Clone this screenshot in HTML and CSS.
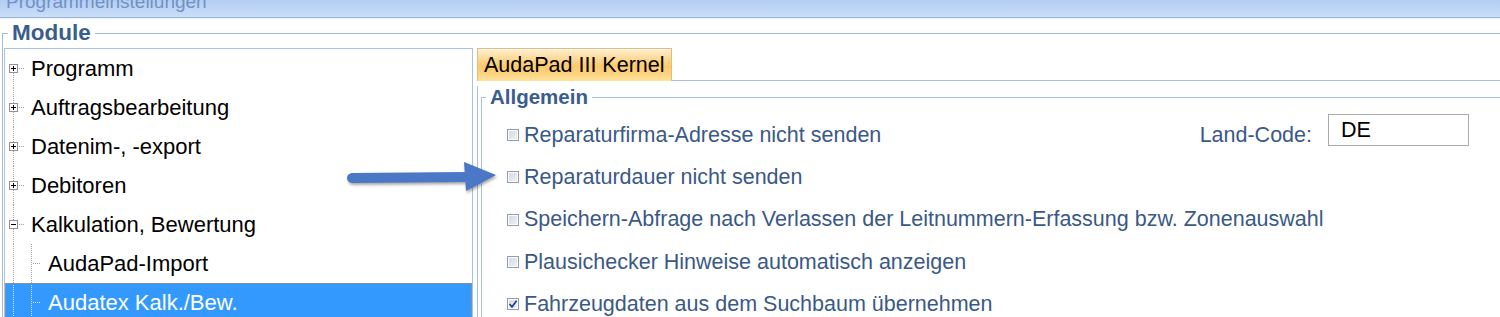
FILE: index.html
```html
<!DOCTYPE html>
<html lang="de">
<head>
<meta charset="UTF-8" />
<title>Programmeinstellungen</title>
<link rel="stylesheet" href="styles.css">
</head>
<body>

<div class="titlebar"><span class="title">Programmeinstellungen</span></div>

<fieldset class="group module">
  <legend>Module</legend>
  <div class="module-body">
    <div class="tree">
      <div class="node first"><span class="twig"><span class="expander plus"></span></span><span class="label">Programm</span></div>
      <div class="node"><span class="twig"><span class="expander plus"></span></span><span class="label">Auftragsbearbeitung</span></div>
      <div class="node"><span class="twig"><span class="expander plus"></span></span><span class="label">Datenim-, -export</span></div>
      <div class="node"><span class="twig"><span class="expander plus"></span></span><span class="label">Debitoren</span></div>
      <div class="node"><span class="twig"><span class="expander minus"></span></span><span class="label">Kalkulation, Bewertung</span></div>
      <div class="node child"><span class="twig"></span><span class="label">AudaPad-Import</span></div>
      <div class="node child selected"><span class="twig"></span><span class="label">Audatex Kalk./Bew.</span></div>
    </div>

    <div class="tabs">
      <div class="tabstrip">
        <div class="tab active">AudaPad III Kernel</div>
        <div class="tabstrip-rest"></div>
      </div>
      <div class="tabpanel">
        <fieldset class="group general">
          <legend>Allgemein</legend>
          <div class="options">
            <div class="option">
              <span class="check"></span>Reparaturfirma-Adresse nicht senden
              <div class="land">
                <label for="land">Land-Code:</label>
                <input id="land" type="text" value="DE">
              </div>
            </div>
            <div class="option"><span class="check"></span>Reparaturdauer nicht senden</div>
            <div class="option"><span class="check"></span>Speichern-Abfrage nach Verlassen der Leitnummern-Erfassung bzw. Zonenauswahl</div>
            <div class="option"><span class="check"></span>Plausichecker Hinweise automatisch anzeigen</div>
            <div class="option">
              <span class="check checked"><svg width="10" height="10" viewBox="0 0 10 10"><path d="M1.5 5 L4 7.8 L8.6 1.8" fill="none" stroke="#1f3f99" stroke-width="1.7"/></svg></span>Fahrzeugdaten aus dem Suchbaum übernehmen
            </div>
          </div>
        </fieldset>
      </div>
    </div>
  </div>
</fieldset>

<!-- Hinweis-Pfeil aus dem Screenshot -->
<svg class="arrow" width="160" height="40" viewBox="0 0 160 40">
  <line x1="7" y1="20" x2="124" y2="19" stroke="#4a77c6" stroke-width="10" stroke-linecap="round"/>
  <polygon points="119,4 151,17 121,33" fill="#4a77c6"/>
</svg>

</body>
</html>
```

FILE: styles.css
```css
body { margin: 0; width: 1500px; height: 317px; overflow: hidden; background: #fff; position: relative; font-family: "Liberation Sans", Arial, sans-serif; }

.titlebar { height: 17px; overflow: hidden; padding-left: 6px; background: linear-gradient(#b3cef3, #cadef8); border-bottom: 1px solid #9bb5d9; box-shadow: 0 1px 0 #eef4fc; }
.title { display: block; margin-top: -8px; font-size: 19px; line-height: 19px; color: #7092c6; }

.group { margin: 0; padding: 0; min-width: 0; border: 1px solid #a6bad2; border-right: 0; border-bottom: 0; }
.group legend { padding: 0 4px; font-weight: bold; color: #3b5d8d; }

.module { margin: 4px 0 0 2px; }
.module legend { margin-left: 5px; font-size: 22.5px; line-height: 22px; }
.module-body { display: flex; margin-top: 4px; }

.tree { flex: none; width: 469px; height: 320px; margin-left: 1px; box-sizing: border-box; border: 1px solid #a7c3e8; padding-top: 0; }
.node { display: flex; align-items: center; height: 39px; font-size: 22px; color: #000; }
.label { padding-left: 2px; }

.twig {
  flex: none; width: 24px; align-self: stretch; display: flex; align-items: center;
  background:
    repeating-linear-gradient(to bottom, #a0a0a0 0 1px, transparent 1px 2px) 8px 0 / 1px 100% no-repeat,
    repeating-linear-gradient(to right, #a0a0a0 0 1px, transparent 1px 2px) 14px 50% / 5px 1px no-repeat;
}
.first .twig {
  background:
    repeating-linear-gradient(to bottom, #a0a0a0 0 1px, transparent 1px 2px) 8px 100% / 1px 50% no-repeat,
    repeating-linear-gradient(to right, #a0a0a0 0 1px, transparent 1px 2px) 14px 50% / 5px 1px no-repeat;
}
.child .twig {
  width: 41px;
  background:
    repeating-linear-gradient(to bottom, #a0a0a0 0 1px, transparent 1px 2px) 8px 0 / 1px 100% no-repeat,
    repeating-linear-gradient(to bottom, #a0a0a0 0 1px, transparent 1px 2px) 26px 0 / 1px 100% no-repeat,
    repeating-linear-gradient(to right, #a0a0a0 0 1px, transparent 1px 2px) 28px 50% / 8px 1px no-repeat;
}

.expander { width: 9px; height: 9px; margin-left: 4px; box-sizing: border-box; border: 1px solid #919191; background-color: #fff; }
.plus { background-image: linear-gradient(#000, #000), linear-gradient(#000, #000); background-size: 5px 1px, 1px 5px; background-position: center; background-repeat: no-repeat; }
.minus { background-image: linear-gradient(#000, #000); background-size: 5px 1px; background-position: center; background-repeat: no-repeat; }

.selected { background: #3399ff; color: #fff; outline: 1px dotted #c98a4c; outline-offset: -1px; }
.selected .twig {
  background:
    repeating-linear-gradient(to bottom, #d8e8ff 0 1px, transparent 1px 2px) 8px 0 / 1px 100% no-repeat,
    repeating-linear-gradient(to bottom, #d8e8ff 0 1px, transparent 1px 2px) 26px 0 / 1px 100% no-repeat,
    repeating-linear-gradient(to right, #fff 0 1px, transparent 1px 2px) 28px 50% / 8px 1px no-repeat;
}

.tabs { flex: 1; margin-left: 4px; min-width: 0; }
.tabstrip { display: flex; height: 33px; }
.tab { width: 195px; box-sizing: border-box; padding-left: 6px; border: 1px solid #e2bb7f; border-bottom: 0; font-size: 21.5px; line-height: 32px; color: #000;
  background: linear-gradient(#fff0d2 0%, #fdd995 30%, #fcc86c 55%, #fdd582 80%, #fee49c 100%); box-shadow: inset 0 1px 0 #fff8e8; }
.tabstrip-rest { flex: 1; border-bottom: 1px solid #a6c0e4; }
.tabpanel { border-left: 1px solid #a6c0e4; padding-left: 3px; height: 260px; }

.general { margin-top: 5px; border-color: #a6c0e4; }
.general legend { margin-left: 4px; font-size: 20.5px; line-height: 22px; }
.options { padding-top: 6px; }
.option { display: flex; align-items: center; height: 42.3px; padding-left: 25px; font-size: 21.5px; color: #3a5986; white-space: nowrap; }

.check { flex: none; width: 12px; height: 12px; margin-right: 5px; box-sizing: border-box; border: 1px solid #8e9db3; background: linear-gradient(135deg, #d5dae1, #eff1f4); box-shadow: inset 0 0 0 1px #fff; display: flex; align-items: center; justify-content: center; }
.check svg { display: block; }

.land { display: flex; align-items: center; margin-left: auto; margin-right: 31px; }
.land label { margin-right: 16px; }
.land input { width: 141px; height: 32px; box-sizing: border-box; margin-bottom: 10px; padding: 0 12px; border: 1px solid #ababab; font: 21.5px "Liberation Sans", Arial, sans-serif; color: #000; }

.arrow { position: absolute; left: 345px; top: 158px; filter: drop-shadow(1px 2px 1.5px rgba(0,0,0,.35)); }
```
